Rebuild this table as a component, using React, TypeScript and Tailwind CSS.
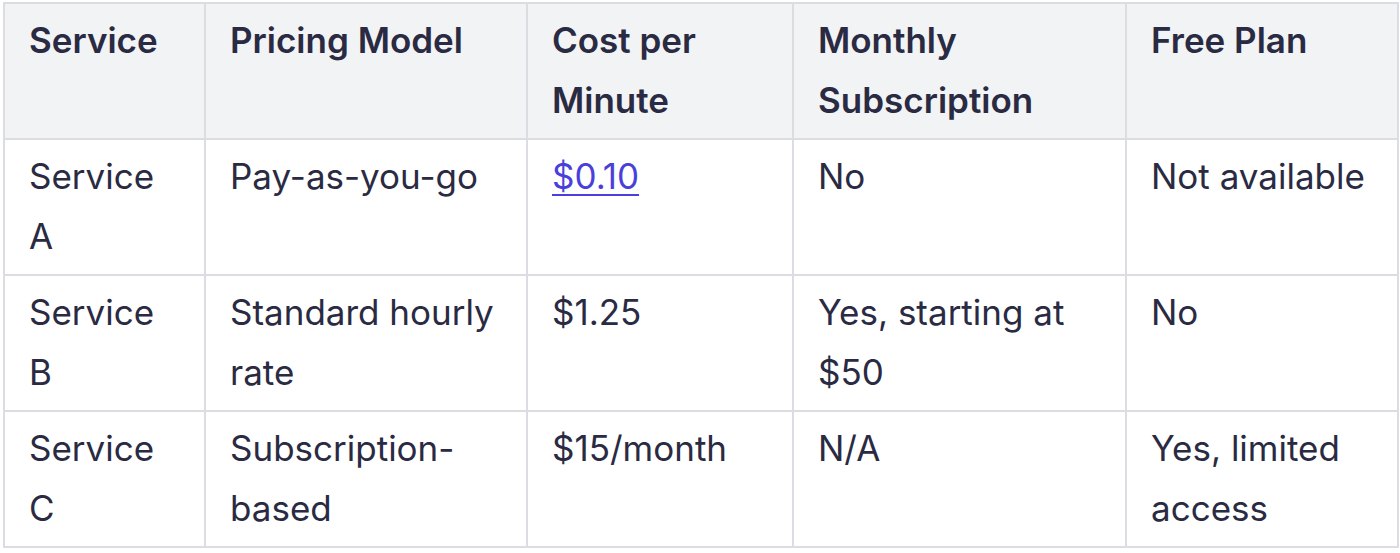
import React from "react";

const rows = [
  ["Service A", "Pay-as-you-go", "$0.10", "No", "Not available"],
  ["Service B", "Standard hourly rate", "$1.25", "Yes, starting at $50", "No"],
  ["Service C", "Subscription-based", "$15/month", "N/A", "Yes, limited access"],
];

const headers = ["Service", "Pricing Model", "Cost per Minute", "Monthly Subscription", "Free Plan"];

export default function App() {
  return (
    <div className="w-[1400px] h-[553px] bg-white pt-[2px] pl-[3px]" style={{ fontFamily: "Inter, 'Noto Sans', sans-serif" }}>
      <table className="table-fixed border-collapse w-[1394px] text-[35px] leading-[60px] text-[#2a2b43]">
        <colgroup>
          <col className="w-[201px]" />
          <col className="w-[322px]" />
          <col className="w-[266px]" />
          <col className="w-[333px]" />
          <col className="w-[272px]" />
        </colgroup>
        <thead>
          <tr className="bg-[#f2f3f5]">
            {headers.map((h) => (
              <th key={h} className="border-2 border-[#dcdde2] px-[24px] pt-[6px] pb-[8px] text-left align-top font-semibold">
                {h}
              </th>
            ))}
          </tr>
        </thead>
        <tbody>
          {rows.map((r) => (
            <tr key={r[0]}>
              {r.map((c, i) => (
                <td key={i} className="border-2 border-[#dcdde2] px-[24px] pt-[6px] pb-[8px] text-left align-top">
                  {c === "$0.10" ? (
                    <a href="#" className="text-[#4b3fdb] underline underline-offset-[5px] decoration-2">
                      {c}
                    </a>
                  ) : (
                    c
                  )}
                </td>
              ))}
            </tr>
          ))}
        </tbody>
      </table>
    </div>
  );
}
